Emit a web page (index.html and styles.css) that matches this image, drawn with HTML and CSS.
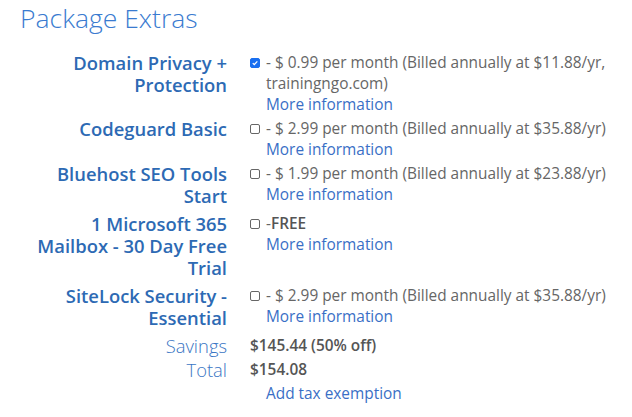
FILE: index.html
```html
<!DOCTYPE html>
<html lang="en">
<head>
    <meta charset="UTF-8">
    <meta name="viewport" content="width=device-width, initial-scale=1.0">
    <title>Package Extras</title>
    <link rel="stylesheet" href="styles.css">
</head>
<body>

    <div class="extras">
        <h2>Package Extras</h2>

        <div class="extras-list">
            <div class="label">Domain Privacy + Protection</div>
            <div class="value">
                <span class="check checked">
                    <svg viewBox="0 0 10 10" width="10" height="10"><path d="M2.2 5.2 L4.1 7.1 L7.9 2.9" fill="none" stroke="#fff" stroke-width="1.6"/></svg>
                </span>
                <div class="text">
                    - $ 0.99 per month (Billed annually at $11.88/yr, trainingngo.com)
                    <a href="#">More information</a>
                </div>
            </div>

            <div class="label">Codeguard Basic</div>
            <div class="value">
                <span class="check"></span>
                <div class="text">
                    - $ 2.99 per month (Billed annually at $35.88/yr)
                    <a href="#">More information</a>
                </div>
            </div>

            <div class="label">Bluehost SEO Tools Start</div>
            <div class="value">
                <span class="check"></span>
                <div class="text">
                    - $ 1.99 per month (Billed annually at $23.88/yr)
                    <a href="#">More information</a>
                </div>
            </div>

            <div class="label">1 Microsoft 365 Mailbox - 30 Day Free Trial</div>
            <div class="value">
                <span class="check"></span>
                <div class="text">
                    -<strong>FREE</strong>
                    <a href="#">More information</a>
                </div>
            </div>

            <div class="label">SiteLock Security - Essential</div>
            <div class="value">
                <span class="check"></span>
                <div class="text">
                    - $ 2.99 per month (Billed annually at $35.88/yr)
                    <a href="#">More information</a>
                </div>
            </div>

            <div class="label label-light">Savings</div>
            <div class="value value-bold">$145.44 (50% off)</div>

            <div class="label label-light">Total</div>
            <div class="value value-bold total">
                $154.08
                <a href="#">Add tax exemption</a>
            </div>
        </div>
    </div>

</body>
</html>
```

FILE: styles.css
```css
body {
    font-family: "Open Sans", Arial, sans-serif;
    margin: 0;
    background-color: #fff;
    color: #666;
}

.extras {
    padding: 0 0 0 20px;
}

.extras h2 {
    margin: 0;
    font-size: 26.5px;
    font-weight: 300;
    line-height: 36px;
    color: #3a7bd0;
}

.extras-list {
    display: grid;
    grid-template-columns: 207px 1fr;
    column-gap: 23px;
    margin-top: 16px;
}

.label {
    text-align: right;
    font-size: 18.4px;
    font-weight: 600;
    line-height: 22px;
    color: #2d6ab4;
    padding-bottom: 6px;
}

.label-light {
    font-weight: 300;
    color: #3a76c4;
    padding-bottom: 2px;
}

.value {
    display: flex;
    align-items: flex-start;
    font-size: 15.4px;
    line-height: 21px;
    margin-bottom: 3px;
}

.check {
    flex: none;
    width: 8px;
    height: 8px;
    margin: 6px 6px 0 0;
    border: 1px solid #666;
    border-radius: 2px;
    display: flex;
}

.check.checked {
    background-color: #1a6ff0;
    border-color: #1a6ff0;
}

.check svg {
    width: 8px;
    height: 8px;
}

.text a,
.total a {
    display: block;
    color: #3a6fc6;
    text-decoration: none;
}

.text strong {
    font-weight: 600;
    color: #555;
}

.value-bold {
    font-weight: 600;
    color: #555;
}

.total {
    display: block;
}

.total a {
    font-weight: 400;
    margin: 3px 0 0 16px;
}
```
